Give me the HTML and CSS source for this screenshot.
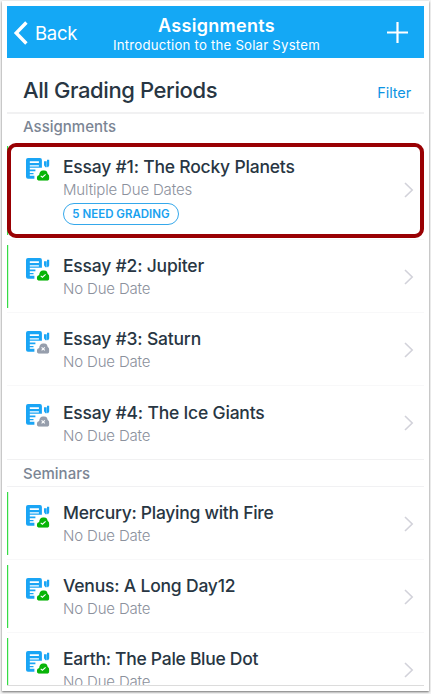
FILE: index.html
```
<!DOCTYPE html>
<html lang="en">
<head>
<meta charset="utf-8">
<title>Assignments</title>
<link rel="stylesheet" href="styles.css">
</head>
<body>
<svg class="defs" width="0" height="0" aria-hidden="true">
  <symbol id="paper" viewBox="0 0 24 24">
    <path fill="#1aa5f5" fill-rule="evenodd" d="M2 0H14Q15.9 0 15.9 1.9V9.8H3.8V11.4H9.4V13.2H3.8V15H7.5V16.2H3.8V17.8H8.4V20.8H2Q0 20.8 0 18.8V2Q0 0 2 0ZM3.8 3.2V4.9H12.9V3.2ZM3.8 7.2V8.6H12.9V7.2Z"/>
    <path fill="#1aa5f5" d="M18 3.2H20.7V9.2H19.4L18 7.2ZM21 1.8H23.2V7.6L22 9.4L21 8.6Z"/>
  </symbol>
  <symbol id="cloud" viewBox="0 0 12 10">
    <path d="M3 10Q0 10 0 7.3Q0 5.1 2.2 4.5Q2.7 0 6.5 0Q9.8 0 10.3 3.3Q12 4.3 12 6.8Q12 10 9.2 10Z"/>
  </symbol>
  <symbol id="published" viewBox="0 0 24 24">
    <use href="#paper"/>
    <use href="#cloud" x="10.8" y="12.3" width="12.6" height="10.5" fill="#08b408"/>
    <path d="M14.7 17.9L16.4 19.2L19.6 16.4" fill="none" stroke="#fff" stroke-width="1.1"/>
  </symbol>
  <symbol id="unpublished" viewBox="0 0 24 24">
    <use href="#paper"/>
    <use href="#cloud" x="10.8" y="12.3" width="12.6" height="10.5" fill="#969eac"/>
    <path d="M15.6 16.4L18.8 19.4M18.8 16.4L15.6 19.4" stroke="#fff" stroke-width="1.1"/>
  </symbol>
  <symbol id="chevron" viewBox="0 0 10 16">
    <path d="M1 1L8.2 8L1 15" fill="none" stroke="#d2d2da" stroke-width="1.6"/>
  </symbol>
</svg>
<div class="frame">
  <div class="screen">
    <header class="navbar">
      <div class="back">
        <svg width="15" height="24" viewBox="0 0 15 24"><path d="M13.4 1.5L3.2 12L13.4 22.5" fill="none" stroke="#fff" stroke-width="3.4"/></svg>
        <span class="back-label">Back</span>
      </div>
      <div class="heading">
        <div class="heading-title">Assignments</div>
        <div class="heading-course">Introduction to the Solar System</div>
      </div>
      <svg class="add" width="21" height="21" viewBox="0 0 21 21"><path d="M10.5 0V21M0 10.5H21" stroke="#fff" stroke-width="2.2"/></svg>
    </header>
    <div class="periods">
      <h1 class="periods-title">All Grading Periods</h1>
      <span class="filter">Filter</span>
    </div>
    <h2 class="section">Assignments</h2>
    <div class="row selected published">
      <svg class="icon"><use href="#published"/></svg>
      <div class="info">
        <div class="name">Essay #1: The Rocky Planets</div>
        <div class="due">Multiple Due Dates</div>
        <div class="badge">5 NEED GRADING</div>
      </div>
      <svg class="chevron"><use href="#chevron"/></svg>
    </div>
    <div class="row published">
      <svg class="icon"><use href="#published"/></svg>
      <div class="info"><div class="name">Essay #2: Jupiter</div><div class="due">No Due Date</div></div>
      <svg class="chevron"><use href="#chevron"/></svg>
    </div>
    <div class="row">
      <svg class="icon"><use href="#unpublished"/></svg>
      <div class="info"><div class="name">Essay #3: Saturn</div><div class="due">No Due Date</div></div>
      <svg class="chevron"><use href="#chevron"/></svg>
    </div>
    <div class="row last">
      <svg class="icon"><use href="#unpublished"/></svg>
      <div class="info"><div class="name">Essay #4: The Ice Giants</div><div class="due">No Due Date</div></div>
      <svg class="chevron"><use href="#chevron"/></svg>
    </div>
    <h2 class="section seminars">Seminars</h2>
    <div class="row published">
      <svg class="icon"><use href="#published"/></svg>
      <div class="info"><div class="name tight">Mercury: Playing with Fire</div><div class="due">No Due Date</div></div>
      <svg class="chevron"><use href="#chevron"/></svg>
    </div>
    <div class="row published">
      <svg class="icon"><use href="#published"/></svg>
      <div class="info"><div class="name">Venus: A Long Day12</div><div class="due">No Due Date</div></div>
      <svg class="chevron"><use href="#chevron"/></svg>
    </div>
    <div class="row published">
      <svg class="icon"><use href="#published"/></svg>
      <div class="info"><div class="name tight">Earth: The Pale Blue Dot</div><div class="due">No Due Date</div></div>
      <svg class="chevron"><use href="#chevron"/></svg>
    </div>
  </div>
</div>
</body>
</html>
```
FILE: styles.css
```
* { box-sizing: border-box; }
body {
  margin: 0;
  height: 694px;
  overflow: hidden;
  padding: 1px 2px 0;
  background: #f4f4f4;
  font-family: Inter, "Liberation Sans", sans-serif;
  color: #283643;
}
.defs { display: block; height: 0; }
.frame {
  width: 427px;
  height: 690px;
  padding: 5px;
  background: #fff;
  box-shadow: 0 1px 2px 0 #6f6f6f;
}
.screen {
  width: 417px;
  height: 680px;
  overflow: hidden;
  border-bottom: 1px solid #dcdcdc;
}
.navbar {
  height: 52px;
  display: grid;
  grid-template-columns: 84px 1fr 84px;
  background: #14a8f5;
  color: #fff;
}
.back { display: flex; align-items: flex-start; padding: 15px 0 0 6px; }
.back-label { margin: 0 0 0 7px; font-size: 18.5px; line-height: 24px; letter-spacing: -.3px; white-space: nowrap; }
.heading { text-align: center; padding-top: 9px; }
.heading-title { margin-left: 2px; font-size: 18px; line-height: 21px; font-weight: 600; letter-spacing: .3px; }
.heading-course { margin-left: 2px; font-size: 13.2px; line-height: 18px; letter-spacing: .22px; white-space: nowrap; }
.add { justify-self: end; margin: 16px 16px 0 0; }
.periods {
  height: 54px;
  display: flex;
  justify-content: space-between;
  padding: 19px 13px 0 16px;
}
.periods-title { margin: 0; font-size: 22px; line-height: 26px; font-weight: 500; letter-spacing: -.4px; }
.filter { padding-top: 4px; font-size: 14.5px; line-height: 24px; letter-spacing: -.1px; color: #0d94e3; }
.section {
  margin: 0;
  height: 29px;
  padding-left: 16px;
  border-top: 2px solid #f1f1f2;
  font-size: 15px;
  line-height: 26px;
  font-weight: 500;
  color: #7b8594;
}
.section.seminars { height: 28px; border-top-width: 1px; border-bottom: 1px solid #f1f1f3; line-height: 28px; }
.row {
  position: relative;
  height: 73px;
  display: flex;
  align-items: center;
  padding: 0 10px 0 19px;
  border-bottom: 1px solid #f8f8f9;
}
.row.last { border: 0; }
.row.last .info { margin-top: 15px; }
.row.published::before {
  content: "";
  position: absolute;
  left: 0;
  top: 5px;
  bottom: 4px;
  width: 2px;
  background: linear-gradient(to right, #36dc46 1px, #d4f9d8 1px);
}
.row.selected { height: 99px; }
.row.selected::after {
  content: "";
  position: absolute;
  inset: 2px 0 1px;
  border: 4px solid #990003;
  border-radius: 9px;
}
.icon { width: 24px; height: 24px; align-self: flex-start; margin-top: 18px; flex: none; }
.selected .icon { margin-top: 17px; }
.info { flex: 1; align-self: flex-start; margin: 14px 0 0 13px; }
.name { font-size: 17.5px; line-height: 24px; font-weight: 500; letter-spacing: -.2px; white-space: nowrap; }
.name.tight { letter-spacing: -.28px; }
.due { font-size: 15px; line-height: 22px; font-weight: 300; letter-spacing: -.16px; color: #8c919d; }
.badge {
  width: 116px;
  height: 22px;
  margin-top: 2px;
  border: 1px solid #35a8eb;
  border-radius: 11px;
  text-align: center;
  font-size: 11.5px;
  line-height: 20px;
  font-weight: 600;
  color: #18a1ef;
  white-space: nowrap;
}
.chevron { width: 10px; height: 16px; flex: none; }
.row:not(.selected) .chevron { margin-top: 1px; }
```
